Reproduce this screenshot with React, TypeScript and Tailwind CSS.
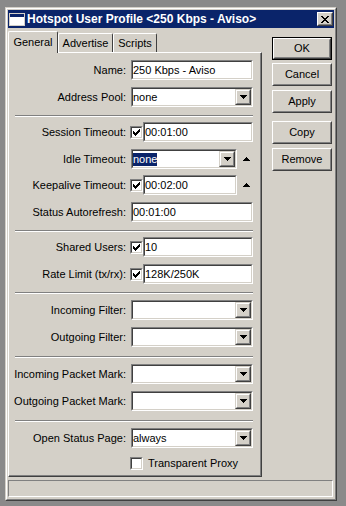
import React from "react";

const Field = ({ className, children }: { className: string; children?: React.ReactNode }) => (
  <div className={`h-[20px] border border-t-[#808080] border-l-[#808080] border-b-white border-r-white ${className}`}>
    <div className="h-full border border-t-[#404040] border-l-[#404040] border-b-[#d4d0c8] border-r-[#d4d0c8] bg-white flex items-center overflow-hidden">
      {children}
    </div>
  </div>
);

const DownArrow = () => (
  <svg width="7" height="4" shapeRendering="crispEdges">
    <rect x="0" y="0" width="7" height="1" fill="#000" />
    <rect x="1" y="1" width="5" height="1" fill="#000" />
    <rect x="2" y="2" width="3" height="1" fill="#000" />
    <rect x="3" y="3" width="1" height="1" fill="#000" />
  </svg>
);

const UpArrow = () => (
  <svg width="7" height="4" shapeRendering="crispEdges">
    <rect x="3" y="0" width="1" height="1" fill="#000" />
    <rect x="2" y="1" width="3" height="1" fill="#000" />
    <rect x="1" y="2" width="5" height="1" fill="#000" />
    <rect x="0" y="3" width="7" height="1" fill="#000" />
  </svg>
);

const DropBtn = () => (
  <div className="w-[16px] h-[16px] shrink-0 border border-t-[#d4d0c8] border-l-[#d4d0c8] border-b-[#404040] border-r-[#404040] bg-[#d4d0c8]">
    <div className="h-full border border-t-white border-l-white border-b-[#808080] border-r-[#808080] flex items-center justify-center">
      <DownArrow />
    </div>
  </div>
);

const Check = ({ checked }: { checked: boolean }) => (
  <div className="w-[13px] h-[13px] shrink-0 border border-t-[#808080] border-l-[#808080] border-b-white border-r-white">
    <div className="h-full border border-t-[#404040] border-l-[#404040] border-b-[#d4d0c8] border-r-[#d4d0c8] bg-white flex items-center justify-center">
      {checked && (
        <svg width="7" height="7" shapeRendering="crispEdges">
          <rect x="6" y="0" width="1" height="1" fill="#000" />
          <rect x="5" y="1" width="2" height="1" fill="#000" />
          <rect x="0" y="2" width="1" height="1" fill="#000" />
          <rect x="4" y="2" width="3" height="1" fill="#000" />
          <rect x="0" y="3" width="2" height="1" fill="#000" />
          <rect x="3" y="3" width="3" height="1" fill="#000" />
          <rect x="0" y="4" width="5" height="1" fill="#000" />
          <rect x="1" y="5" width="3" height="1" fill="#000" />
          <rect x="2" y="6" width="1" height="1" fill="#000" />
        </svg>
      )}
    </div>
  </div>
);

const Row = ({ label, className, children }: { label: string; className: string; children?: React.ReactNode }) => (
  <div className={`flex items-center h-[20px] ${className}`}>
    <div className="w-[117px] text-right whitespace-nowrap leading-none">{label}</div>
    <div className="ml-[4px] flex items-center">{children}</div>
  </div>
);

const Sep = ({ className }: { className: string }) => (
  <div className={`ml-[6px] w-[238px] h-[2px] border-t border-t-[#808080] border-b border-b-white ${className}`} />
);

const Txt = ({ children }: { children?: React.ReactNode }) => (
  <span className="leading-none whitespace-nowrap">{children}</span>
);

const Btn = ({ label, className, isDefault }: { label: string; className: string; isDefault?: boolean }) => {
  const inner = (
    <div className="h-full border border-t-white border-l-white border-b-[#404040] border-r-[#404040]">
      <div className="h-full border border-t-[#d4d0c8] border-l-[#d4d0c8] border-b-[#808080] border-r-[#808080] flex items-center justify-center leading-none">
        {label}
      </div>
    </div>
  );
  return (
    <div className={`w-[60px] h-[23px] ${className}`}>
      {isDefault ? <div className="h-full border border-black">{inner}</div> : inner}
    </div>
  );
};

export default function App() {
  return (
    <div className="w-[346px] h-[506px] bg-[#8a8a8a] pt-[7px] pl-[5px] font-['Liberation_Sans',Arial,sans-serif] text-[11px] text-black">
      <div className="w-[332px] h-[494px] bg-[#d4d0c8] border border-t-[#d4d0c8] border-l-[#d4d0c8] border-b-[#404040] border-r-[#404040]">
        <div className="h-full border border-t-white border-l-white border-b-[#808080] border-r-[#808080] p-px flex flex-col">
          {/* Title bar */}
          <div className="h-[18px] bg-[#0a246a] flex items-center shrink-0">
            <div className="ml-px w-[16px] h-[13px] border border-[#d4d0c8] bg-white flex flex-col">
              <div className="h-[3px] bg-[#0a246a]" />
            </div>
            <span className="ml-[2px] text-white font-bold text-[12px] leading-none whitespace-nowrap">
              Hotspot User Profile &lt;250 Kbps - Aviso&gt;
            </span>
            <div className="ml-auto mr-px w-[16px] h-[14px] border border-t-white border-l-white border-b-[#404040] border-r-[#404040] bg-[#d4d0c8]">
              <div className="h-full border border-t-[#d4d0c8] border-l-[#d4d0c8] border-b-[#808080] border-r-[#808080] flex items-center justify-center">
                <svg width="8" height="7" shapeRendering="crispEdges">
                  <path d="M0 0h2v1h-2zM6 0h2v1h-2zM1 1h2v1h-2zM5 1h2v1h-2zM2 2h4v1h-4zM3 3h2v1h-2zM2 4h4v1h-4zM1 5h2v1h-2zM5 5h2v1h-2zM0 6h2v1h-2zM6 6h2v1h-2z" fill="#000" />
                </svg>
              </div>
            </div>
          </div>

          {/* Body */}
          <div className="flex pt-[3px] shrink-0">
            <div className="w-[254px] flex flex-col">
              {/* Tabs */}
              <div className="h-[21px] flex items-end relative z-10">
                <div className="w-[50px] h-[22px] -mb-px bg-[#d4d0c8] border-t border-l border-t-white border-l-white border-r border-r-[#404040] rounded-t-[2px] flex items-center justify-center leading-none pb-[1px]">
                  General
                </div>
                <div className="w-[55px] h-[19px] bg-[#d4d0c8] border-t border-l border-t-white border-l-white border-r border-r-[#404040] rounded-t-[2px] flex items-center justify-center leading-none">
                  Advertise
                </div>
                <div className="w-[44px] h-[19px] bg-[#d4d0c8] border-t border-l border-t-white border-l-white border-r border-r-[#404040] rounded-t-[2px] flex items-center justify-center leading-none">
                  Scripts
                </div>
              </div>
              {/* Panel */}
              <div className="h-[425px] border border-t-white border-l-white border-b-[#404040] border-r-[#404040]">
                <div className="h-full border-r border-b border-r-[#808080] border-b-[#808080] pt-[7px] flex flex-col">
                  <Row label="Name:" className="mt-0">
                    <Field className="ml-px w-[122px]">
                      <Txt>250 Kbps - Aviso</Txt>
                    </Field>
                  </Row>
                  <Row label="Address Pool:" className="mt-[7px]">
                    <Field className="ml-px w-[122px]">
                      <div className="flex-1"><Txt>none</Txt></div>
                      <DropBtn />
                    </Field>
                  </Row>
                  <Sep className="mt-[8px]" />
                  <Row label="Session Timeout:" className="mt-[5px]">
                    <Check checked />
                    <Field className="w-[110px]">
                      <Txt>00:01:00</Txt>
                    </Field>
                  </Row>
                  <Row label="Idle Timeout:" className="mt-[7px]">
                    <Field className="ml-px w-[106px]">
                      <div className="flex-1 flex items-center">
                        <span className="bg-[#0a246a] text-white leading-[13px] whitespace-nowrap">none</span>
                      </div>
                      <DropBtn />
                    </Field>
                    <div className="ml-[6px] pb-[1px]">
                      <UpArrow />
                    </div>
                  </Row>
                  <Row label="Keepalive Timeout:" className="mt-[6px]">
                    <Check checked />
                    <Field className="w-[94px]">
                      <Txt>00:02:00</Txt>
                    </Field>
                    <div className="ml-[6px] pb-[1px]">
                      <UpArrow />
                    </div>
                  </Row>
                  <Row label="Status Autorefresh:" className="mt-[7px]">
                    <Field className="ml-px w-[122px]">
                      <Txt>00:01:00</Txt>
                    </Field>
                  </Row>
                  <Sep className="mt-[8px]" />
                  <Row label="Shared Users:" className="mt-[5px]">
                    <Check checked />
                    <Field className="w-[110px]">
                      <Txt>10</Txt>
                    </Field>
                  </Row>
                  <Row label="Rate Limit (tx/rx):" className="mt-[7px]">
                    <Check checked />
                    <Field className="w-[110px]">
                      <Txt>128K/250K</Txt>
                    </Field>
                  </Row>
                  <Sep className="mt-[8px]" />
                  <Row label="Incoming Filter:" className="mt-[6px]">
                    <Field className="ml-px w-[122px]">
                      <div className="flex-1" />
                      <DropBtn />
                    </Field>
                  </Row>
                  <Row label="Outgoing Filter:" className="mt-[7px]">
                    <Field className="ml-px w-[122px]">
                      <div className="flex-1" />
                      <DropBtn />
                    </Field>
                  </Row>
                  <Sep className="mt-[9px]" />
                  <Row label="Incoming Packet Mark:" className="mt-[6px]">
                    <Field className="ml-px w-[122px]">
                      <div className="flex-1" />
                      <DropBtn />
                    </Field>
                  </Row>
                  <Row label="Outgoing Packet Mark:" className="mt-[7px]">
                    <Field className="ml-px w-[122px]">
                      <div className="flex-1" />
                      <DropBtn />
                    </Field>
                  </Row>
                  <Sep className="mt-[9px]" />
                  <Row label="Open Status Page:" className="mt-[6px]">
                    <Field className="ml-px w-[122px]">
                      <div className="flex-1"><Txt>always</Txt></div>
                      <DropBtn />
                    </Field>
                  </Row>
                  <div className="mt-[5px] h-[20px] flex items-center">
                    <div className="w-[117px]" />
                    <div className="ml-[4px]">
                      <Check checked={false} />
                    </div>
                    <span className="ml-[5px] leading-none whitespace-nowrap">Transparent Proxy</span>
                  </div>
                </div>
              </div>
            </div>

            {/* Buttons */}
            <div className="ml-[10px] w-[60px] flex flex-col">
              <Btn label="OK" className="mt-[6px]" isDefault />
              <Btn label="Cancel" className="mt-[3px]" />
              <Btn label="Apply" className="mt-[4px]" />
              <Btn label="Copy" className="mt-[8px]" />
              <Btn label="Remove" className="mt-[4px]" />
            </div>
          </div>

          {/* Status bar */}
          <div className="mt-[3px] h-[17px] w-[325px] border border-t-[#808080] border-l-[#808080] border-b-white border-r-white shrink-0" />
        </div>
      </div>
    </div>
  );
}
